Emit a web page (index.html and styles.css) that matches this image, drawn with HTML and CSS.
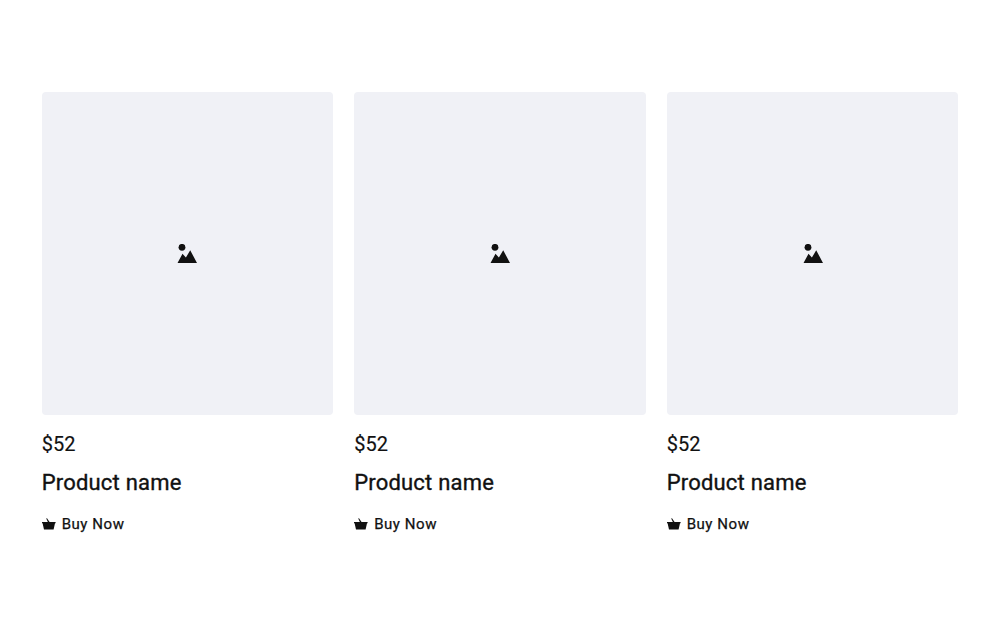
FILE: index.html
```html
<!DOCTYPE html>
<html lang="en">
<head>
  <meta charset="UTF-8">
  <meta name="viewport" content="width=device-width, initial-scale=1.0">
  <title>Products</title>
  <link rel="stylesheet" href="styles.css">
</head>
<body>
  <div class="product-grid">
    <div class="product">
      <div class="product-image">
        <svg width="20" height="20" viewBox="0 0 20 20"><circle cx="5" cy="3.3" r="3.4"/><path d="M0.5 19 L5.5 9.8 L8.9 13.6 L13.2 6.2 L20 19 Z"/></svg>
      </div>
      <div class="price">$52</div>
      <div class="name">Product name</div>
      <a class="buy" href="#">
        <svg width="14" height="12" viewBox="0 0 14 12"><path d="M4.2 0.6 L5 0.2 L7.6 4 H5.9 Z"/><path d="M0 4 H13.6 V5.2 H13 L11.6 11.4 H2 L0.6 5.2 H0 Z"/></svg>
        Buy Now
      </a>
    </div>
    <div class="product">
      <div class="product-image">
        <svg width="20" height="20" viewBox="0 0 20 20"><circle cx="5" cy="3.3" r="3.4"/><path d="M0.5 19 L5.5 9.8 L8.9 13.6 L13.2 6.2 L20 19 Z"/></svg>
      </div>
      <div class="price">$52</div>
      <div class="name">Product name</div>
      <a class="buy" href="#">
        <svg width="14" height="12" viewBox="0 0 14 12"><path d="M4.2 0.6 L5 0.2 L7.6 4 H5.9 Z"/><path d="M0 4 H13.6 V5.2 H13 L11.6 11.4 H2 L0.6 5.2 H0 Z"/></svg>
        Buy Now
      </a>
    </div>
    <div class="product">
      <div class="product-image">
        <svg width="20" height="20" viewBox="0 0 20 20"><circle cx="5" cy="3.3" r="3.4"/><path d="M0.5 19 L5.5 9.8 L8.9 13.6 L13.2 6.2 L20 19 Z"/></svg>
      </div>
      <div class="price">$52</div>
      <div class="name">Product name</div>
      <a class="buy" href="#">
        <svg width="14" height="12" viewBox="0 0 14 12"><path d="M4.2 0.6 L5 0.2 L7.6 4 H5.9 Z"/><path d="M0 4 H13.6 V5.2 H13 L11.6 11.4 H2 L0.6 5.2 H0 Z"/></svg>
        Buy Now
      </a>
    </div>
  </div>
</body>
</html>
```

FILE: styles.css
```css
body {
  margin: 0;
  background-color: #fff;
  color: #111;
  font-family: Roboto, "Liberation Sans", sans-serif;
}

.product-grid {
  display: grid;
  grid-template-columns: repeat(3, 1fr);
  column-gap: 20.83px;
  padding: 92px 41.67px 0;
}

.product-image {
  display: flex;
  align-items: center;
  justify-content: center;
  height: 323px;
  background-color: #f0f1f6;
  border-radius: 4px;
}

.product-image svg {
  fill: #111;
}

.price {
  margin-top: 17px;
  font-size: 20px;
  line-height: 24px;
  -webkit-text-stroke: 0.15px #111;
}

.name {
  margin-top: 12px;
  font-size: 22px;
  line-height: 30px;
  letter-spacing: 0.2px;
  -webkit-text-stroke: 0.35px #111;
}

.buy {
  display: flex;
  align-items: center;
  gap: 6px;
  margin-top: 16px;
  color: #111;
  font-size: 15px;
  line-height: 20px;
  letter-spacing: 0.55px;
  text-decoration: none;
  -webkit-text-stroke: 0.25px #111;
}

.buy svg {
  fill: #111;
}
```
